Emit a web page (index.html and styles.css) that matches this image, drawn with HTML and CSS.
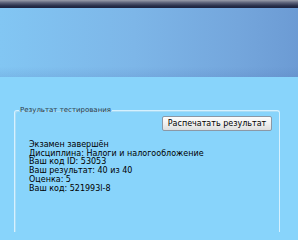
FILE: index.html
```html
<!DOCTYPE html>
<html lang="ru">
<head>
<meta charset="utf-8">
<link rel="stylesheet" href="styles.css">
</head>
<body>
<div class="topbar"></div>
<div class="header"></div>
<main class="content">
  <fieldset class="result">
    <legend class="legend">Результат тестирования</legend>
    <div class="actions">
      <button class="print-btn" type="button">Распечатать результат</button>
    </div>
    <div class="lines">
      <div>Экзамен завершён</div>
      <div>Дисциплина: Налоги и налогообложение</div>
      <div>Ваш код ID: 53053</div>
      <div>Ваш результат: 40 из 40</div>
      <div>Оценка: 5</div>
      <div>Ваш код: 521993l-8</div>
    </div>
  </fieldset>
</main>
</body>
</html>
```

FILE: styles.css
```css
html, body {
  margin: 0;
  padding: 0;
  height: 100%;
}
body {
  background: #88d4fb;
  font-family: "DejaVu Sans", Verdana, sans-serif;
  font-size: 8px;
  color: #000;
  overflow: hidden;
}
.topbar {
  height: 8px;
  background: linear-gradient(to bottom, #9a9eab 0%, #5a6078 35%, #262d48 75%, #1c2340 100%);
}
.header {
  height: 69px;
  background:
    linear-gradient(to bottom, rgba(255,255,255,0) 0%, rgba(255,255,255,0) 85%, rgba(60,90,160,0.12) 100%),
    linear-gradient(to right, #82c6f3 0%, #7db6e8 45%, #74a6dc 80%, #6c9bd4 100%);
}
.content {
  padding: 29px 18px 0 14px;
}
.result {
  margin: 0;
  padding: 0 7px 0 14px;
  border: 1px solid #d6f1ff;
  border-bottom: 0;
  box-shadow: inset 1px 1px 0 #a9dcf5;
  border-radius: 3px 3px 0 0;
  height: 125px;
}
.legend {
  padding: 0 1px;
  margin-left: -10px;
  font-size: 7px;
  color: #2d3b48;
}
.actions {
  display: flex;
  justify-content: flex-end;
  padding-top: 2px;
}
.print-btn {
  font-family: inherit;
  font-size: 8px;
  color: #000;
  width: 110px;
  height: 15px;
  padding: 0;
  border: 1px solid #8b98a6;
  border-radius: 2px;
  background: linear-gradient(to bottom, #fdfdfd 0%, #f0f0f0 50%, #dedede 100%);
}
.lines {
  padding-top: 10px;
  line-height: 8.7px;
}
```
